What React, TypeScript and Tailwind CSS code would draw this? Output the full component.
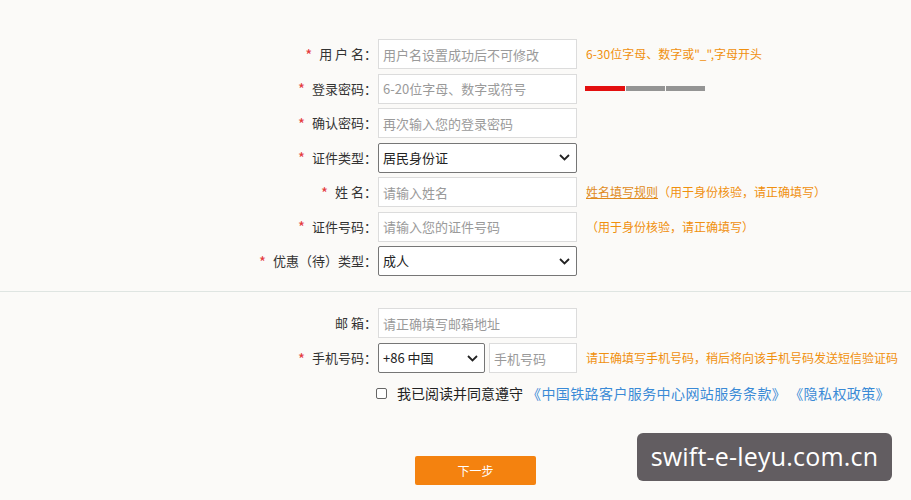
import React from "react";

const Star = () => <span className="text-[#e4393c] mr-[7px] text-[15px] leading-none">*</span>;

const Row: React.FC<{ label: string; required?: boolean; children: React.ReactNode }> = ({
  label,
  required,
  children,
}) => (
  <div className="flex items-center h-[30px]">
    <div className="w-[128px] pr-[1px] flex justify-end items-center text-[13px] text-[#333] whitespace-nowrap">
      {required && <Star />}
      <span>{label}</span>
    </div>
    {children}
  </div>
);

const TextBox: React.FC<{ placeholder: string; w?: string }> = ({ placeholder, w = "w-[199px]" }) => (
  <input
    className={`${w} h-[30px] border border-[#dcdcdc] bg-white px-[4px] text-[13px] text-[#333] placeholder:text-[#9a9a9a] outline-none`}
    placeholder={placeholder}
  />
);

const Select: React.FC<{ value: string; w?: string }> = ({ value, w = "w-[199px]" }) => (
  <div
    className={`${w} h-[30px] border border-[#767676] rounded-[2px] bg-white pl-[4px] pr-[6px] flex items-center justify-between text-[13px] text-[#222]`}
  >
    <span>{value}</span>
    <svg width="11" height="7" viewBox="0 0 11 7" fill="none">
      <path d="M1 1l4.5 4.5L10 1" stroke="#222" strokeWidth="1.8" />
    </svg>
  </div>
);

const Hint: React.FC<{ children: React.ReactNode }> = ({ children }) => (
  <span className="ml-[9px] text-[12px] text-[#f0900f] whitespace-nowrap">{children}</span>
);

export default function App() {
  return (
    <div
      className="w-[911px] h-[500px] bg-[#fbfaf8] relative overflow-hidden"
      style={{ fontFamily: '"Noto Sans CJK SC", "Noto Sans", sans-serif' }}
    >
      <div className="pl-[250px] pt-[39px] flex flex-col gap-[4.5px]">
        <Row label="用 户 名：" required>
          <TextBox placeholder="用户名设置成功后不可修改" />
          <Hint>6-30位字母、数字或"_",字母开头</Hint>
        </Row>
        <Row label="登录密码：" required>
          <TextBox placeholder="6-20位字母、数字或符号" />
          <div className="ml-[8px] flex gap-[1px] h-[5px]">
            <div className="w-[40px] bg-[#e30f0f]" />
            <div className="w-[39px] bg-[#949494]" />
            <div className="w-[39px] bg-[#949494]" />
          </div>
        </Row>
        <Row label="确认密码：" required>
          <TextBox placeholder="再次输入您的登录密码" />
        </Row>
        <Row label="证件类型：" required>
          <Select value="居民身份证" />
        </Row>
        <Row label="姓 名：" required>
          <TextBox placeholder="请输入姓名" />
          <Hint>
            <span className="underline text-[#e08a1a]">姓名填写规则</span>
            <span className="text-[#f0900f]">（用于身份核验，请正确填写）</span>
          </Hint>
        </Row>
        <Row label="证件号码：" required>
          <TextBox placeholder="请输入您的证件号码" />
          <Hint>（用于身份核验，请正确填写）</Hint>
        </Row>
        <Row label="优惠（待）类型：" required>
          <Select value="成人" />
        </Row>
      </div>

      <div className="mt-[15px] h-px bg-[#dfe5e2]" />

      <div className="pl-[250px] pt-[16px] flex flex-col gap-[5px]">
        <Row label="邮 箱：">
          <TextBox placeholder="请正确填写邮箱地址" />
        </Row>
        <Row label="手机号码：" required>
          <Select value="+86 中国" w="w-[107px]" />
          <div className="ml-[4px]">
            <TextBox placeholder="手机号码" w="w-[88px]" />
          </div>
          <Hint>请正确填写手机号码，稍后将向该手机号码发送短信验证码</Hint>
        </Row>
      </div>

      <div className="pl-[376px] mt-[12px] flex items-center h-[16px] text-[14px] whitespace-nowrap">
        <span className="w-[11px] h-[11px] border border-[#666] rounded-[2px] bg-white" />
        <span className="ml-[10px] text-[#222]">我已阅读并同意遵守</span>
        <span className="ml-[4px] text-[#3a8ad6] tracking-[0.4px]">《中国铁路客户服务中心网站服务条款》</span>
        <span className="ml-[3px] text-[#3a8ad6] tracking-[0.4px]">《隐私权政策》</span>
      </div>

      <div className="pl-[415px] mt-[55px]">
        <button className="w-[121px] h-[29px] bg-[#f4820f] rounded-[2px] text-white text-[12px]">
          下一步
        </button>
      </div>

      <div className="absolute left-[637px] top-[433px] w-[255px] h-[48px] rounded-[6px] bg-[#625d61] flex items-center justify-center">
        <span
          className="text-white text-[25px] tracking-[0.2px]"
          style={{ fontFamily: '"Open Sans", "DejaVu Sans", sans-serif' }}
        >
          swift-e-leyu.com.cn
        </span>
      </div>
    </div>
  );
}
